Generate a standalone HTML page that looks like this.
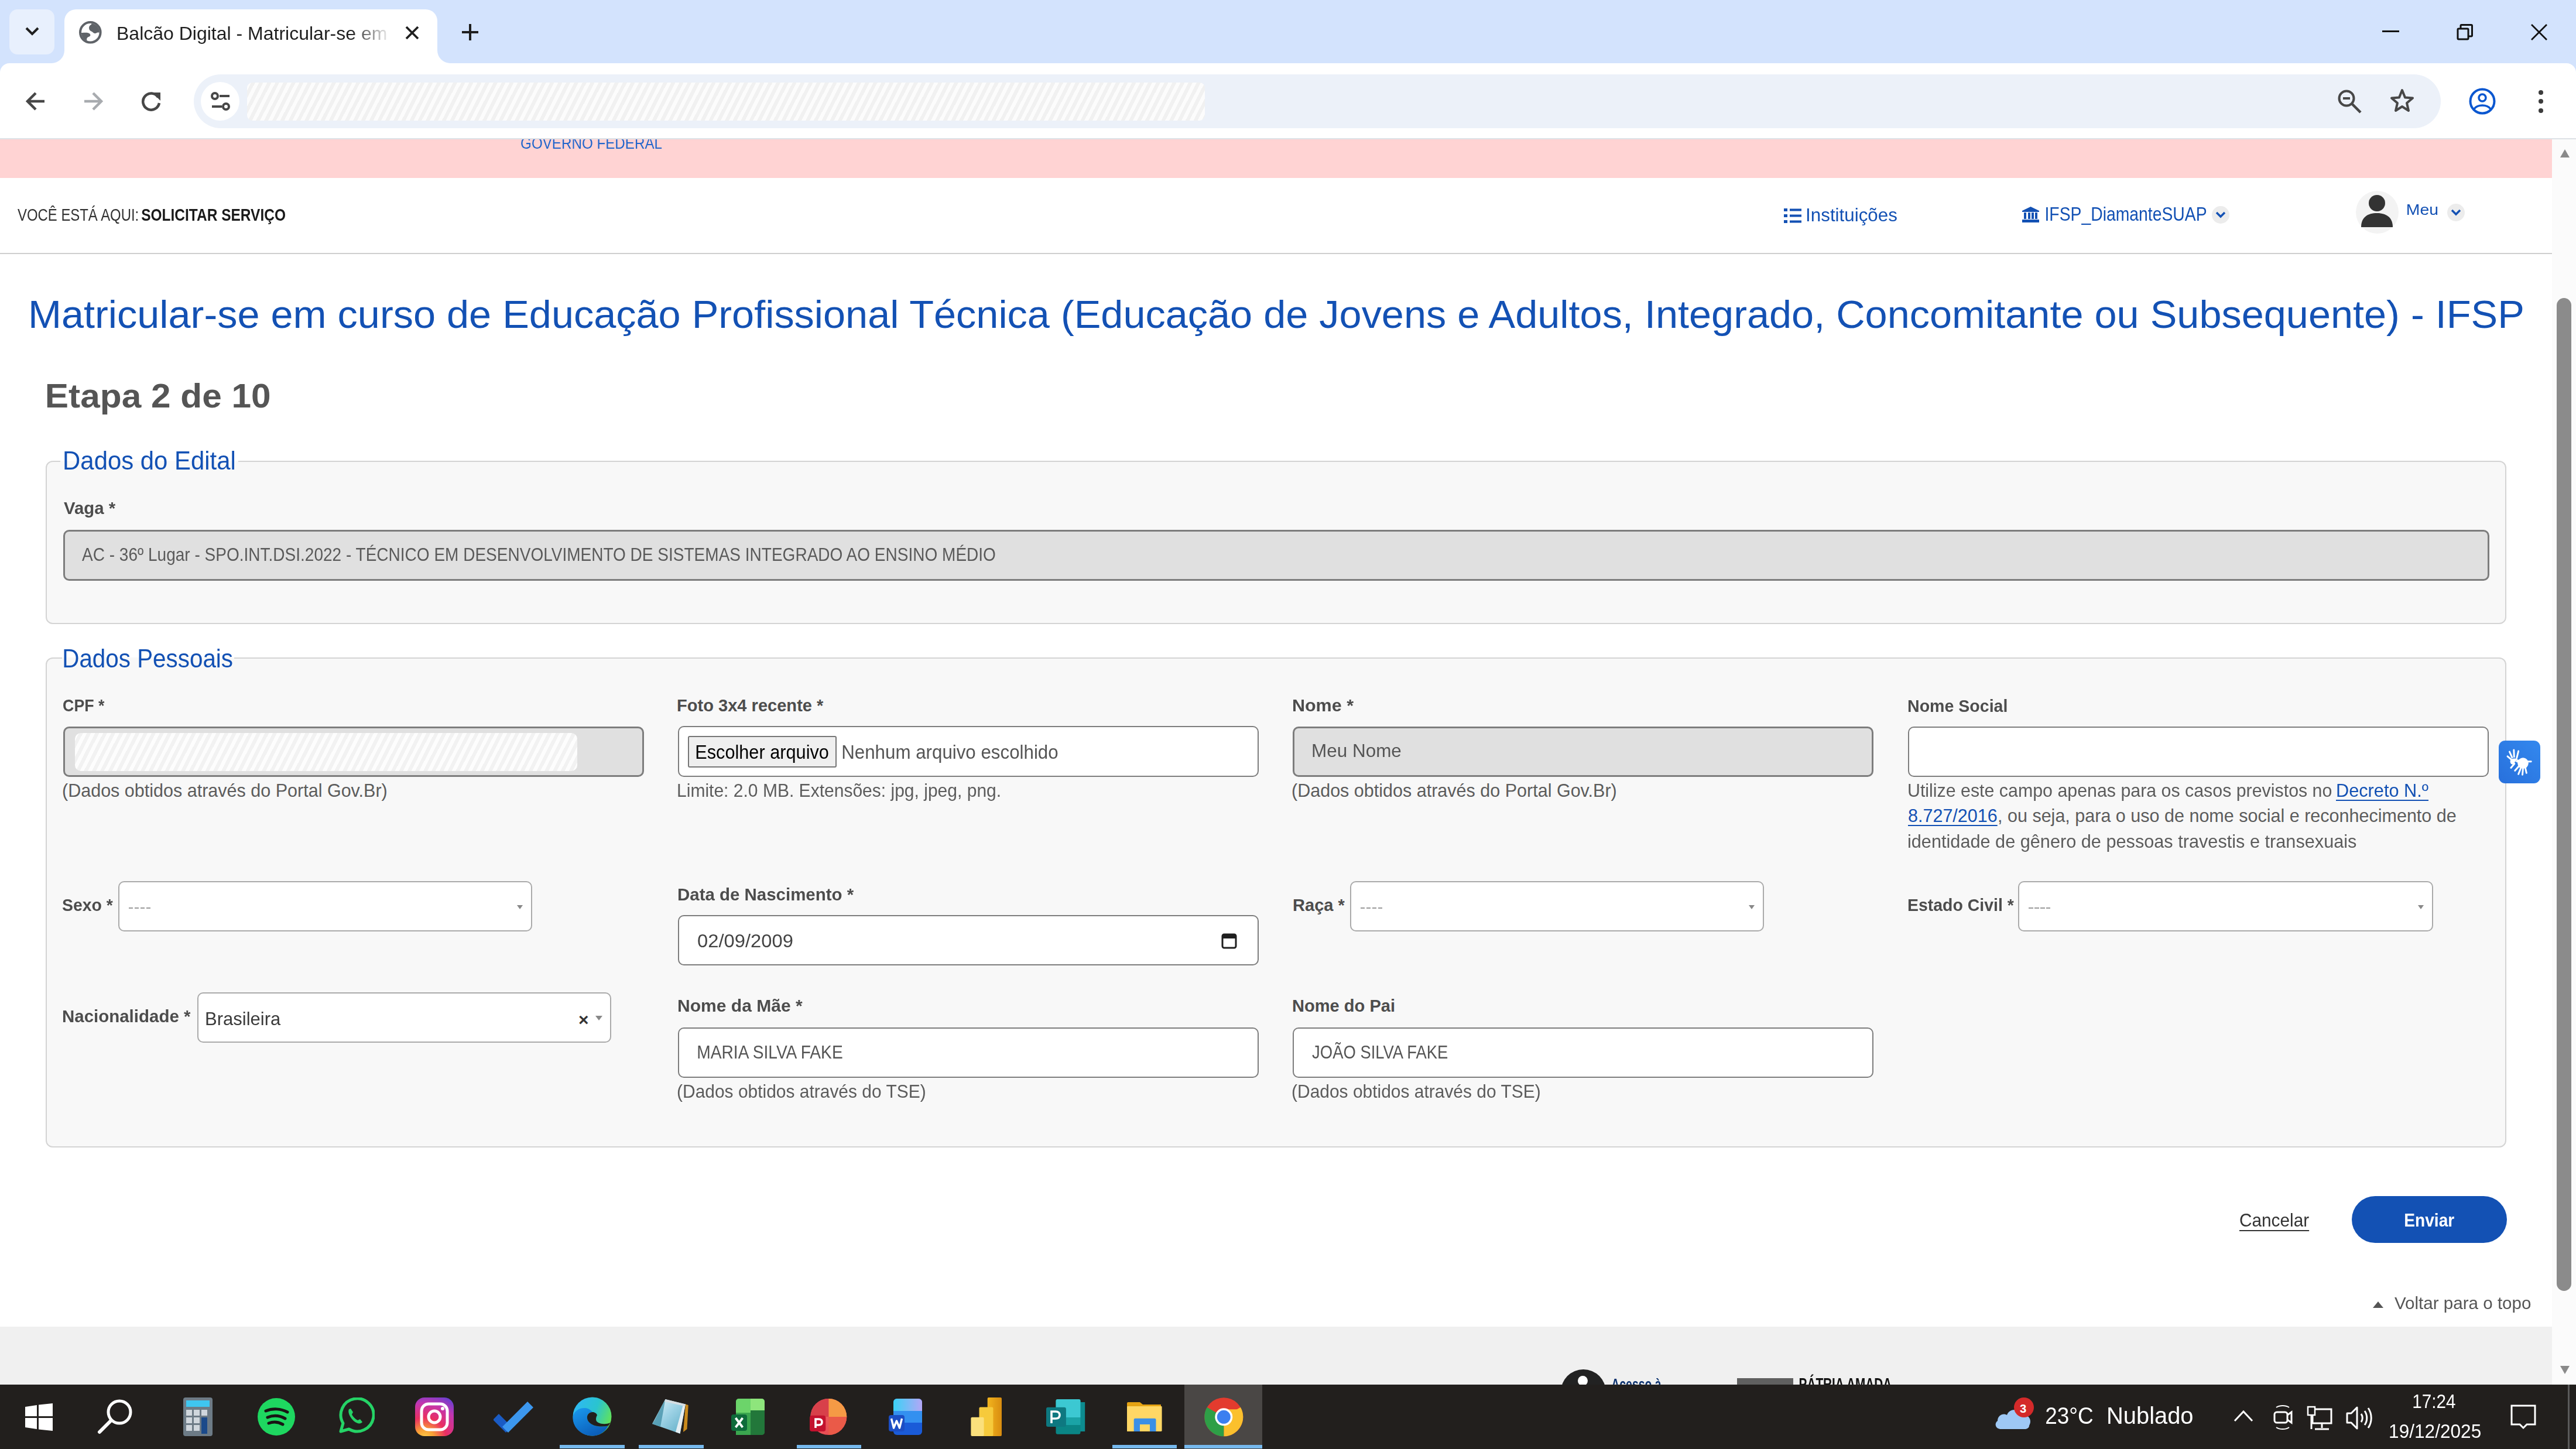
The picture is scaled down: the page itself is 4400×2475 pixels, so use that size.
<!DOCTYPE html><html><head><meta charset="utf-8"><style>*{margin:0;padding:0}
html,body{width:4400px;height:2475px;overflow:hidden;background:#fff}
body{position:relative;font-family:"Liberation Sans",sans-serif}
body>div,body>svg{position:absolute}
.t{white-space:nowrap}
</style></head><body>
<div style="left:0px;top:0px;width:4400px;height:140px;background:#d3e3fd"></div>
<div style="left:16px;top:16px;width:77px;height:77px;background:#e8f0fd;border-radius:14px"></div>
<svg style="left:43px;top:46px" width="24" height="16" viewBox="0 0 24 16"><path d="M2 2 L12 12 L22 2" fill="none" stroke="#1f1f1f" stroke-width="4"/></svg>
<div style="left:110px;top:16px;width:637px;height:94px;background:#fff;border-radius:20px 20px 0 0"></div>
<svg style="left:88px;top:86px" width="22" height="22"><path d="M22 0 V22 H0 A22 22 0 0 0 22 0Z" fill="#fff"/></svg>
<svg style="left:747px;top:86px" width="22" height="22"><path d="M0 0 V22 H22 A22 22 0 0 1 0 0Z" fill="#fff"/></svg>
<svg style="left:134.5px;top:35.5px" width="39" height="39" viewBox="0 0 39 39"><circle cx="19.3" cy="19.3" r="17.3" fill="none" stroke="#5f6368" stroke-width="4"/><path d="M21.4 3.9 L21.2 5.6 C17.5 8 17 10 17.1 12 C17 15 19 17 22 18 C24 19 25 21 27 21 C29 21 30 20 31.5 19.4 L34.8 19.4 A15.5 15.5 0 0 0 21.4 3.9 Z" fill="#5f6368"/><path d="M3.8 20.1 L5.2 20.1 C9 20 12 19.5 14.5 20.1 C17 20.5 19.4 22 19.4 24 C19.4 26 16 27 14.5 28 C13 29 13 31 13.4 33.6 L13.1 33.5 A15.5 15.5 0 0 1 3.8 20.1 Z" fill="#5f6368"/></svg>
<div class="t" style="left:199px;top:32px;width:470px;height:50px;overflow:hidden;font-size:32px;line-height:50px;color:#1f1f1f;white-space:nowrap;-webkit-mask-image:linear-gradient(90deg,#000 85%,transparent 100%)">Balcão Digital - Matricular-se em curso</div>
<svg style="left:691px;top:44px" width="26" height="24" viewBox="0 0 26 24"><path d="M3 2 L23 22 M23 2 L3 22" stroke="#1f1f1f" stroke-width="3.8"/></svg>
<svg style="left:787px;top:40px" width="32" height="30" viewBox="0 0 32 30"><path d="M16 1 V29 M2 15 H30" stroke="#1f1f1f" stroke-width="4"/></svg>
<div style="left:4069px;top:52px;width:29px;height:3px;background:#111"></div>
<svg style="left:4195px;top:40px" width="32" height="30" viewBox="0 0 32 30"><rect x="3" y="9" width="18" height="18" rx="1.5" fill="none" stroke="#111" stroke-width="3"/><path d="M8 8 V4 Q8 2.5 9.5 2.5 H26 Q27.5 2.5 27.5 4 V20.5 Q27.5 22 26 22 H22" fill="none" stroke="#111" stroke-width="3"/></svg>
<svg style="left:4321px;top:40px" width="32" height="30" viewBox="0 0 32 30"><path d="M3 2 L29 28 M29 2 L3 28" stroke="#111" stroke-width="2.8"/></svg>
<div style="left:0px;top:108px;width:4400px;height:129px;background:#fff;border-radius:16px 16px 0 0"></div>
<div style="left:0px;top:236px;width:4400px;height:2px;background:#dde1e6"></div>
<svg style="left:43px;top:155px" width="36" height="36" viewBox="0 0 36 36"><path d="M33 18 H5 M18 4 L4 18 L18 32" fill="none" stroke="#474747" stroke-width="4.5"/></svg>
<svg style="left:141px;top:155px" width="36" height="36" viewBox="0 0 36 36"><path d="M3 18 H31 M18 4 L32 18 L18 32" fill="none" stroke="#a8abaf" stroke-width="4.5"/></svg>
<svg style="left:239px;top:155px" width="38" height="38" viewBox="0 0 38 38"><path d="M31 11 A14 14 0 1 0 33 21" fill="none" stroke="#474747" stroke-width="4.5"/><path d="M21 3 H35 V17 Z" fill="#474747"/></svg>
<div style="left:331px;top:127px;width:3838px;height:92px;background:#ecf1f9;border-radius:46px"></div>
<div style="left:343px;top:140px;width:66px;height:66px;border-radius:50%;background:#fff"></div>
<svg style="left:359px;top:156px" width="36" height="34" viewBox="0 0 36 34"><circle cx="8" cy="8" r="5" fill="none" stroke="#474747" stroke-width="4"/><path d="M16 8 H33" stroke="#474747" stroke-width="4"/><circle cx="27" cy="26" r="5" fill="none" stroke="#474747" stroke-width="4"/><path d="M3 26 H20" stroke="#474747" stroke-width="4"/></svg>
<div style="left:422px;top:141px;width:1636px;height:65px;border-radius:9px;background:repeating-linear-gradient(117deg,#fcfcfc 0 6.15px,#f1f1f1 6.15px 12.3px)"></div>
<svg style="left:3992px;top:152px" width="44" height="42" viewBox="0 0 44 42"><circle cx="16" cy="16" r="12.5" fill="none" stroke="#474747" stroke-width="4"/><path d="M10 16 H22" stroke="#474747" stroke-width="4"/><path d="M25 25 L40 40" stroke="#474747" stroke-width="4.5"/></svg>
<svg style="left:4081px;top:150px" width="44" height="44" viewBox="0 0 44 44"><path d="M22 4 L27 16.5 L40 17.5 L30 26 L33 39 L22 32 L11 39 L14 26 L4 17.5 L17 16.5 Z" fill="none" stroke="#474747" stroke-width="4" stroke-linejoin="round"/></svg>
<svg style="left:4215px;top:149px" width="50" height="48" viewBox="0 0 50 48"><circle cx="25" cy="24" r="20.5" fill="none" stroke="#0b57d0" stroke-width="4"/><circle cx="25" cy="18" r="6" fill="none" stroke="#0b57d0" stroke-width="3.5"/><path d="M11 37 C17 29 33 29 39 37" fill="none" stroke="#0b57d0" stroke-width="3.5"/></svg>
<div style="left:4336px;top:154px;width:8px;height:8px;border-radius:50%;background:#3c3c3c"></div>
<div style="left:4336px;top:169px;width:8px;height:8px;border-radius:50%;background:#3c3c3c"></div>
<div style="left:4336px;top:185px;width:8px;height:8px;border-radius:50%;background:#3c3c3c"></div>
<div style="left:0px;top:238px;width:4359px;height:2127px;background:#fff"></div>
<div style="left:0px;top:238px;width:4359px;height:66px;background:#ffd3d3"></div>
<div class="t" style="left:889.00px;top:230.00px;font-size:27.62px;line-height:30.85px;color:#2266cc;transform:scaleX(0.8759);transform-origin:1.00px 0;clip-path:inset(8px 0 0 0)">GOVERNO FEDERAL</div>
<div class="t" style="left:30.00px;top:351.29px;font-size:29.51px;line-height:32.96px;color:#333;transform:scaleX(0.8103);transform-origin:0.00px 0;">VOCÊ ESTÁ AQUI:</div>
<div class="t" style="left:241.00px;top:351.29px;font-size:29.51px;line-height:32.96px;color:#1a1a1a;font-weight:700;transform:scaleX(0.8305);transform-origin:1.00px 0;">SOLICITAR SERVIÇO</div>
<div style="left:0px;top:432px;width:4359px;height:2px;background:#cfcfcf"></div>
<svg style="left:3046px;top:355px" width="32" height="27" viewBox="0 0 32 27"><rect x="1" y="1" width="6" height="5" fill="#1351b4"/><rect x="1" y="11" width="6" height="5" fill="#1351b4"/><rect x="1" y="21" width="6" height="5" fill="#1351b4"/><rect x="11" y="1.5" width="20" height="4" fill="#1351b4"/><rect x="11" y="11.5" width="20" height="4" fill="#1351b4"/><rect x="11" y="21.5" width="20" height="4" fill="#1351b4"/></svg>
<div class="t" style="left:3084.00px;top:350.05px;font-size:31.98px;line-height:35.72px;color:#1351b4;transform:scaleX(0.9808);transform-origin:3.00px 0;">Instituições</div>
<svg style="left:3453px;top:352px" width="31" height="28" viewBox="0 0 31 28"><path d="M15.5 1 L30 8 V10 H1 V8 Z" fill="#1351b4"/><rect x="4" y="11" width="4" height="11" fill="#1351b4"/><rect x="11" y="11" width="4" height="11" fill="#1351b4"/><rect x="17" y="11" width="4" height="11" fill="#1351b4"/><rect x="23" y="11" width="4" height="11" fill="#1351b4"/><rect x="1" y="23" width="29" height="5" fill="#1351b4"/></svg>
<div class="t" style="left:3492.00px;top:346.74px;font-size:33.43px;line-height:37.35px;color:#1351b4;transform:scaleX(0.8478);transform-origin:3.00px 0;">IFSP_DiamanteSUAP</div>
<div style="left:3778px;top:352px;width:30px;height:30px;border-radius:50%;background:#ececec"></div>
<svg style="left:3784px;top:361px" width="18" height="12" viewBox="0 0 18 12"><path d="M2 2 L9 9 L16 2" fill="none" stroke="#1351b4" stroke-width="3.5"/></svg>
<div style="left:4024px;top:326px;width:73px;height:73px;border-radius:50%;background:#f3f3f3"></div>
<svg style="left:4030px;top:331px" width="60" height="60" viewBox="0 0 60 60"><circle cx="30" cy="16" r="14" fill="#333"/><path d="M3 57 C3 40 14 33 30 33 C46 33 57 40 57 57 Z" fill="#333"/></svg>
<div class="t" style="left:4110.00px;top:344.32px;font-size:26.16px;line-height:29.23px;color:#1351b4;transform:scaleX(1.0851);transform-origin:2.00px 0;">Meu</div>
<div style="left:4180px;top:348px;width:30px;height:30px;border-radius:50%;background:#ececec"></div>
<svg style="left:4186px;top:357px" width="18" height="12" viewBox="0 0 18 12"><path d="M2 2 L9 9 L16 2" fill="none" stroke="#1351b4" stroke-width="3.5"/></svg>
<div class="t" style="left:48.00px;top:498.81px;font-size:67.59px;line-height:75.51px;color:#1351b4;transform:scaleX(1.0129);transform-origin:5.00px 0;">Matricular-se em curso de Educação Profissional Técnica (Educação de Jovens e Adultos, Integrado, Concomitante ou Subsequente) - IFSP</div>
<div class="t" style="left:77.00px;top:644.37px;font-size:58.14px;line-height:64.95px;color:#555;font-weight:700;transform:scaleX(1.0384);transform-origin:4.00px 0;">Etapa 2 de 10</div>
<div style="left:78px;top:787px;width:4203px;height:279px;background:#f8f8f8;border:2px solid #d4d4d4;border-radius:12px;box-sizing:border-box"></div>
<div style="left:103px;top:785px;width:304px;height:5px;background:linear-gradient(#fff 0 2px,#f8f8f8 2px)"></div>
<div class="t" style="left:107.00px;top:762.53px;font-size:43.61px;line-height:48.72px;color:#1351b4;transform:scaleX(0.9603);transform-origin:3.00px 0;">Dados do Edital</div>
<div style="left:78px;top:1123px;width:4203px;height:837px;background:#f8f8f8;border:2px solid #d4d4d4;border-radius:12px;box-sizing:border-box"></div>
<div style="left:106px;top:1121px;width:294px;height:5px;background:linear-gradient(#fff 0 2px,#f8f8f8 2px)"></div>
<div class="t" style="left:106.00px;top:1100.53px;font-size:43.61px;line-height:48.72px;color:#1351b4;transform:scaleX(0.9260);transform-origin:3.00px 0;">Dados Pessoais</div>
<div class="t" style="left:109.00px;top:851.68px;font-size:29.07px;line-height:32.48px;color:#4d4d4d;font-weight:700;transform:scaleX(1.0115);transform-origin:0.00px 0;">Vaga *</div>
<div style="left:108px;top:905px;width:4144px;height:87px;background:#e0e0e0;border:3px solid #7d7d7d;border-radius:10px;box-sizing:border-box"></div>
<div class="t" style="left:140.00px;top:930.05px;font-size:31.98px;line-height:35.72px;color:#5a5a5a;transform:scaleX(0.8764);transform-origin:0.00px 0;">AC - 36º Lugar - SPO.INT.DSI.2022 - TÉCNICO EM DESENVOLVIMENTO DE SISTEMAS INTEGRADO AO ENSINO MÉDIO</div>
<div class="t" style="left:107.00px;top:1188.68px;font-size:29.07px;line-height:32.48px;color:#4d4d4d;font-weight:700;transform:scaleX(0.9211);transform-origin:1.00px 0;">CPF *</div>
<div style="left:108px;top:1241px;width:992px;height:86px;background:#e0e0e0;border:3px solid #7d7d7d;border-radius:10px;box-sizing:border-box"></div>
<div style="left:128px;top:1252px;width:858px;height:65px;border-radius:10px;background:repeating-linear-gradient(117deg,#fdfdfd 0 6.15px,#f2f2f2 6.15px 12.3px)"></div>
<div class="t" style="left:106.00px;top:1333.37px;font-size:30.52px;line-height:34.10px;color:#5c5c5c;">(Dados obtidos através do Portal Gov.Br)</div>
<div class="t" style="left:1156.00px;top:1188.68px;font-size:29.07px;line-height:32.48px;color:#4d4d4d;font-weight:700;">Foto 3x4 recente *</div>
<div style="left:1158px;top:1240px;width:992px;height:87px;background:#fff;border:2px solid #7d7d7d;border-radius:10px;box-sizing:border-box"></div>
<div style="left:1175px;top:1257px;width:254px;height:54px;background:#efefef;border:2px solid #767676;border-radius:3px;box-sizing:border-box"></div>
<div class="t" style="left:1187.00px;top:1265.74px;font-size:33.43px;line-height:37.35px;color:#000;transform:scaleX(0.9184);transform-origin:3.00px 0;">Escolher arquivo</div>
<div class="t" style="left:1437.00px;top:1265.74px;font-size:33.43px;line-height:37.35px;color:#555;transform:scaleX(0.9362);transform-origin:3.00px 0;">Nenhum arquivo escolhido</div>
<div class="t" style="left:1156.00px;top:1333.37px;font-size:30.52px;line-height:34.10px;color:#5c5c5c;transform:scaleX(0.9839);transform-origin:2.00px 0;">Limite: 2.0 MB. Extensões: jpg, jpeg, png.</div>
<div class="t" style="left:2207.00px;top:1188.68px;font-size:29.07px;line-height:32.48px;color:#4d4d4d;font-weight:700;transform:scaleX(1.0510);transform-origin:2.00px 0;">Nome *</div>
<div style="left:2208px;top:1241px;width:992px;height:86px;background:#e0e0e0;border:3px solid #7d7d7d;border-radius:10px;box-sizing:border-box"></div>
<div class="t" style="left:2240.00px;top:1265.71px;font-size:31.25px;line-height:34.91px;color:#555;transform:scaleX(1.0067);transform-origin:2.00px 0;">Meu Nome</div>
<div class="t" style="left:2206.00px;top:1333.37px;font-size:30.52px;line-height:34.10px;color:#5c5c5c;">(Dados obtidos através do Portal Gov.Br)</div>
<div class="t" style="left:3258.00px;top:1189.68px;font-size:29.07px;line-height:32.48px;color:#4d4d4d;font-weight:700;transform:scaleX(0.9824);transform-origin:2.00px 0;">Nome Social</div>
<div style="left:3259px;top:1241px;width:992px;height:86px;background:#fff;border:2px solid #7d7d7d;border-radius:10px;box-sizing:border-box"></div>
<div class="t" style="left:3258.00px;top:1333.37px;font-size:30.52px;line-height:34.10px;color:#5c5c5c;transform:scaleX(0.9945);transform-origin:2.00px 0;">Utilize este campo apenas para os casos previstos no</div>
<div class="t" style="left:3990.00px;top:1333.37px;font-size:30.52px;line-height:34.10px;color:#1351b4;transform:scaleX(1.0065);transform-origin:2.00px 0;text-decoration:underline;text-underline-offset:5px;text-decoration-thickness:2px">Decreto N.º</div>
<div class="t" style="left:3259.00px;top:1376.37px;font-size:30.52px;line-height:34.10px;color:#1351b4;text-decoration:underline;text-underline-offset:5px;text-decoration-thickness:2px">8.727/2016</div>
<div class="t" style="left:3412.00px;top:1376.37px;font-size:30.52px;line-height:34.10px;color:#5c5c5c;">, ou seja, para o uso de nome social e reconhecimento de</div>
<div class="t" style="left:3258.00px;top:1420.37px;font-size:30.52px;line-height:34.10px;color:#5c5c5c;transform:scaleX(1.0053);transform-origin:2.00px 0;">identidade de gênero de pessoas travestis e transexuais</div>
<div style="left:4268px;top:1265px;width:71px;height:73px;border-radius:11px;background:linear-gradient(45deg,#2870dc,#3388ee)"></div>
<svg style="left:4268px;top:1265px" width="71" height="74" viewBox="0 0 71 74"><g transform="translate(-7.5,-5.5) scale(0.98)"><g fill="none" stroke="#fff" stroke-linecap="round" stroke-width="3"><path d="M23 33 L30 39 M26.5 25 L31 35 M34 22 L34.5 34 M42 24 L39 36"/><path d="M29 53 L35 46 M36 58 L43 50 M42 64 L46 54 M49 65 L50 54 M56 62 L54 53 M57 42 L64 42"/></g><path d="M30 38 C34 36 40 36 42 40 C38 40 34 42 36 46 C33 48 29 48 28 44 C27 41 28 39 30 38Z" fill="#fff"/><circle cx="50" cy="45" r="9.5" fill="#fff"/><path d="M36 42 L44 38 L46 46 Z" fill="#fff"/></g></svg>
<div class="t" style="left:106.00px;top:1529.68px;font-size:29.07px;line-height:32.48px;color:#4d4d4d;font-weight:700;transform:scaleX(0.9773);transform-origin:1.00px 0;">Sexo *</div>
<div style="left:202px;top:1505px;width:707px;height:86px;background:#fff;border:2px solid #aaa;border-radius:10px;box-sizing:border-box"></div>
<div style="left:883px;top:1546px;width:0;height:0;border-left:5.5px solid transparent;border-right:5.5px solid transparent;border-top:7px solid #888"></div>
<div style="left:220px;top:1550px;width:37px;height:2px;background:repeating-linear-gradient(90deg,#999 0 7.5px,transparent 7.5px 10px)"></div>
<div class="t" style="left:1157.00px;top:1511.68px;font-size:29.07px;line-height:32.48px;color:#4d4d4d;font-weight:700;transform:scaleX(1.0136);transform-origin:2.00px 0;">Data de Nascimento *</div>
<div style="left:1158px;top:1563px;width:992px;height:86px;background:#fff;border:2px solid #7d7d7d;border-radius:10px;box-sizing:border-box"></div>
<div class="t" style="left:1191.00px;top:1590.05px;font-size:31.98px;line-height:35.72px;color:#444;transform:scaleX(1.0253);transform-origin:1.00px 0;">02/09/2009</div>
<svg style="left:2086px;top:1594px" width="27" height="27" viewBox="0 0 27 27"><rect x="2" y="2" width="23" height="23" rx="3" fill="none" stroke="#1f1f1f" stroke-width="3"/><rect x="2" y="2" width="23" height="7" fill="#1f1f1f"/></svg>
<div class="t" style="left:2208.00px;top:1529.68px;font-size:29.07px;line-height:32.48px;color:#4d4d4d;font-weight:700;">Raça *</div>
<div style="left:2306px;top:1505px;width:707px;height:86px;background:#fff;border:2px solid #aaa;border-radius:10px;box-sizing:border-box"></div>
<div style="left:2987px;top:1546px;width:0;height:0;border-left:5.5px solid transparent;border-right:5.5px solid transparent;border-top:7px solid #888"></div>
<div style="left:2324px;top:1550px;width:37px;height:2px;background:repeating-linear-gradient(90deg,#999 0 7.5px,transparent 7.5px 10px)"></div>
<div class="t" style="left:3258.00px;top:1529.68px;font-size:29.07px;line-height:32.48px;color:#4d4d4d;font-weight:700;transform:scaleX(0.9783);transform-origin:2.00px 0;">Estado Civil *</div>
<div style="left:3447px;top:1505px;width:709px;height:86px;background:#fff;border:2px solid #aaa;border-radius:10px;box-sizing:border-box"></div>
<div style="left:4130px;top:1546px;width:0;height:0;border-left:5.5px solid transparent;border-right:5.5px solid transparent;border-top:7px solid #888"></div>
<div style="left:3465px;top:1550px;width:37px;height:2px;background:repeating-linear-gradient(90deg,#999 0 7.5px,transparent 7.5px 10px)"></div>
<div class="t" style="left:106.00px;top:1719.68px;font-size:29.07px;line-height:32.48px;color:#4d4d4d;font-weight:700;transform:scaleX(1.0140);transform-origin:2.00px 0;">Nacionalidade *</div>
<div style="left:337px;top:1695px;width:707px;height:86px;background:#fff;border:2px solid #aaa;border-radius:10px;box-sizing:border-box"></div>
<div class="t" style="left:350.00px;top:1723.05px;font-size:31.98px;line-height:35.72px;color:#3a3a3a;transform:scaleX(0.9695);transform-origin:3.00px 0;">Brasileira</div>
<div class="t" style="left:988.00px;top:1724.84px;font-size:30.00px;line-height:33.52px;color:#333;font-weight:700;">×</div>
<div style="left:1017px;top:1735px;width:0;height:0;border-left:6px solid transparent;border-right:6px solid transparent;border-top:8px solid #888"></div>
<div class="t" style="left:1157.00px;top:1701.68px;font-size:29.07px;line-height:32.48px;color:#4d4d4d;font-weight:700;transform:scaleX(1.0341);transform-origin:2.00px 0;">Nome da Mãe *</div>
<div style="left:1158px;top:1755px;width:992px;height:86px;background:#fff;border:2px solid #7d7d7d;border-radius:10px;box-sizing:border-box"></div>
<div class="t" style="left:1190.00px;top:1780.71px;font-size:31.25px;line-height:34.91px;color:#555;transform:scaleX(0.9015);transform-origin:2.00px 0;">MARIA SILVA FAKE</div>
<div class="t" style="left:1156.00px;top:1847.37px;font-size:30.52px;line-height:34.10px;color:#5c5c5c;transform:scaleX(0.9814);transform-origin:2.00px 0;">(Dados obtidos através do TSE)</div>
<div class="t" style="left:2207.00px;top:1701.68px;font-size:29.07px;line-height:32.48px;color:#4d4d4d;font-weight:700;">Nome do Pai</div>
<div style="left:2208px;top:1755px;width:992px;height:86px;background:#fff;border:2px solid #7d7d7d;border-radius:10px;box-sizing:border-box"></div>
<div class="t" style="left:2241.00px;top:1780.71px;font-size:31.25px;line-height:34.91px;color:#555;transform:scaleX(0.8779);transform-origin:1.00px 0;">JOÃO SILVA FAKE</div>
<div class="t" style="left:2206.00px;top:1847.37px;font-size:30.52px;line-height:34.10px;color:#5c5c5c;transform:scaleX(0.9814);transform-origin:2.00px 0;">(Dados obtidos através do TSE)</div>
<div class="t" style="left:3825.00px;top:2067.37px;font-size:30.52px;line-height:34.10px;color:#333;transform:scaleX(0.9752);transform-origin:1.00px 0;text-decoration:underline;text-underline-offset:6px;text-decoration-thickness:2px">Cancelar</div>
<div style="left:4017px;top:2043px;width:265px;height:80px;background:#1351b4;border-radius:40px"></div>
<div class="t" style="left:4106.00px;top:2067.37px;font-size:30.52px;line-height:34.10px;color:#fff;font-weight:700;transform:scaleX(0.9231);transform-origin:2.00px 0;">Enviar</div>
<div style="left:4053px;top:2223px;width:0;height:0;border-left:9px solid transparent;border-right:9px solid transparent;border-bottom:11px solid #555"></div>
<div class="t" style="left:4090.00px;top:2209.68px;font-size:29.07px;line-height:32.48px;color:#555;transform:scaleX(1.0175);transform-origin:0.00px 0;">Voltar para o topo</div>
<div style="left:0px;top:2266px;width:4359px;height:99px;background:#f0f0f0"></div>
<div style="left:2666px;top:2339px;width:77px;height:77px;border-radius:50%;background:#222"></div>
<div style="left:2695px;top:2350px;width:17px;height:17px;border-radius:50%;background:#fff"></div>
<div class="t" style="left:2752.00px;top:2350.00px;font-size:27.62px;line-height:30.85px;color:#0c326f;font-weight:700;transform:scaleX(0.7025);transform-origin:1.00px 0;">Acesso à</div>
<div style="left:2967px;top:2354px;width:96px;height:11px;background:#606060"></div>
<div class="t" style="left:3072.00px;top:2347.68px;font-size:29.07px;line-height:32.48px;color:#111;font-weight:700;transform:scaleX(0.7136);transform-origin:2.00px 0;">PÁTRIA AMADA</div>
<div style="left:4359px;top:238px;width:41px;height:2127px;background:#fbfbfb"></div>
<div style="left:4373px;top:255px;width:0;height:0;border-left:8px solid transparent;border-right:8px solid transparent;border-bottom:14px solid #8a8a8a"></div>
<div style="left:4367px;top:509px;width:25px;height:1696px;background:#8b8b8b;border-radius:13px"></div>
<div style="left:4373px;top:2333px;width:0;height:0;border-left:8px solid transparent;border-right:8px solid transparent;border-top:14px solid #8a8a8a"></div>
<div style="left:0px;top:2365px;width:4400px;height:110px;background:#221f1d"></div>
<svg style="left:43px;top:2397px" width="47" height="47" viewBox="0 0 47 47"><path d="M0 6 L20 3 V22 H0Z M23 2.5 L47 0 V22 H23Z M0 25 H20 V44 L0 41Z M23 25 H47 V47 L23 44.5Z" fill="#fff"/></svg>
<svg style="left:166px;top:2388px" width="62" height="62" viewBox="0 0 62 62"><circle cx="38" cy="24" r="19" fill="none" stroke="#fff" stroke-width="5"/><path d="M24 38 L4 58" stroke="#fff" stroke-width="6" stroke-linecap="round"/></svg>
<svg style="left:313px;top:2387px" width="50" height="66" viewBox="0 0 50 66"><rect x="0" y="0" width="50" height="66" rx="4" fill="#6d7b86"/><rect x="5" y="5" width="40" height="11" fill="#3fc6f0"/><rect x="5" y="21" width="10" height="10" fill="#cfd6dc"/><rect x="18" y="21" width="10" height="10" fill="#cfd6dc"/><rect x="31" y="21" width="10" height="10" fill="#cfd6dc"/><rect x="5" y="34" width="10" height="10" fill="#cfd6dc"/><rect x="18" y="34" width="10" height="10" fill="#cfd6dc"/><rect x="5" y="47" width="10" height="10" fill="#cfd6dc"/><rect x="18" y="47" width="10" height="10" fill="#cfd6dc"/><rect x="31" y="34" width="10" height="28" fill="#1b4a8a"/><rect x="5" y="60" width="10" height="0" fill="#cfd6dc"/></svg>
<svg style="left:440px;top:2388px" width="64" height="64" viewBox="0 0 64 64"><circle cx="32" cy="32" r="32" fill="#1ed760"/><path d="M14 22 C26 17 40 18 51 24 M17 33 C27 29 38 30 47 35 M19 43 C27 40 36 41 43 45" fill="none" stroke="#191414" stroke-width="5" stroke-linecap="round"/></svg>
<svg style="left:574px;top:2387px" width="66" height="66" viewBox="0 0 66 66"><path d="M8 58 L12 44 A28 28 0 1 1 22 54 Z" fill="none" stroke="#25d366" stroke-width="5" stroke-linejoin="round"/><path d="M22 20 C20 24 22 32 30 40 C36 45 42 46 45 42 L41 37 L37 39 C33 37 29 33 27 29 L29 25 L25 19Z" fill="#25d366"/></svg>
<svg style="left:709px;top:2387px" width="66" height="66" viewBox="0 0 66 66"><defs><radialGradient id="ig" cx="0.25" cy="1.08" r="1.25"><stop offset="0" stop-color="#fdd54c"/><stop offset="0.2" stop-color="#f9a035"/><stop offset="0.45" stop-color="#ea2f62"/><stop offset="0.75" stop-color="#c236b0"/><stop offset="1" stop-color="#5f40d4"/></radialGradient></defs><rect width="66" height="66" rx="16" fill="url(#ig)"/><rect x="11" y="11" width="44" height="44" rx="12" fill="none" stroke="#fff" stroke-width="5"/><circle cx="33" cy="33" r="10" fill="none" stroke="#fff" stroke-width="5"/><circle cx="47" cy="19" r="3" fill="#fff"/></svg>
<svg style="left:843px;top:2392px" width="68" height="60" viewBox="0 0 68 60"><path d="M4 28 L26 50" stroke="#1a5bc4" stroke-width="14"/><path d="M20 50 L63 7" stroke="#3c97ee" stroke-width="14"/></svg>
<svg style="left:978px;top:2386px" width="67" height="67" viewBox="0 0 67 67"><defs><linearGradient id="ed" x1="0" y1="0.2" x2="1" y2="0.6"><stop offset="0" stop-color="#2fb8f5"/><stop offset="0.55" stop-color="#2ac4cf"/><stop offset="1" stop-color="#64e455"/></linearGradient><linearGradient id="ed2" x1="0" y1="0" x2="0.6" y2="1"><stop offset="0" stop-color="#1a9af0"/><stop offset="1" stop-color="#0b5db8"/></linearGradient></defs><circle cx="33.5" cy="33.5" r="33" fill="url(#ed)"/><path d="M0.5 36 C1 24 12 18 22 19 C30 20 34 26 34 26 C28 26 24 31 25 37 C27 47 40 53 61 49.5 C55 61 45 66.5 33.5 66.5 C15 66.5 0.5 52 0.5 36Z" fill="url(#ed2)"/><path d="M34 26 C28 26 24 31 25 37 C27 47 40 53 61 49.5 C62.5 47.5 63.5 46 64.5 44 C58 47 50 47 44 44 C38 41 40 35 42 31 C40 27 37 26 34 26Z" fill="#221f1d"/></svg>
<div style="left:956px;top:2468px;width:111px;height:6px;background:#76b9ed"></div>
<svg style="left:1114px;top:2390px" width="62" height="60" viewBox="0 0 62 60"><defs><linearGradient id="np" x1="0" y1="0" x2="1" y2="1"><stop offset="0" stop-color="#e8f6fb"/><stop offset="0.45" stop-color="#9fd3e6"/><stop offset="1" stop-color="#5aaac4"/></linearGradient></defs><path d="M22.4 0 L56.9 8.4 L47.6 58.7 L0 41.9 Z" fill="url(#np)"/><path d="M22.4 0 L16 12 L10 24 L4 36 L0 41.9 L14 47 L19 20 Z" fill="#3f8ea6" opacity="0.75"/><path d="M56.9 8.4 L47.6 58.7 L40 56 L53 9 Z" fill="#e6eef2"/><path d="M57 8.4 L61.7 10 L59.5 51 L53 56 Z" fill="#c98a1c"/><path d="M22.4 0 L56.9 8.4 L56 12 L21 4Z" fill="#d5dde2"/></svg>
<div style="left:1091px;top:2468px;width:111px;height:6px;background:#76b9ed"></div>
<svg style="left:1249px;top:2389px" width="57" height="62" viewBox="0 0 57 62"><rect x="8" y="0" width="49" height="62" rx="5" fill="#2a8f45"/><path d="M13 0 H33 V24 H8 V5 A5 5 0 0 1 13 0Z" fill="#6cd46a"/><path d="M33 0 H52 A5 5 0 0 1 57 5 V20 H33Z" fill="#8ee57c"/><path d="M33 20 H57 V57 A5 5 0 0 1 52 62 H33Z" fill="#22773a"/><rect x="8" y="24" width="25" height="38" fill="#3ba64f"/><rect x="0" y="27" width="27" height="28" rx="4" fill="#0e6b3a"/><path d="M7.5 33 L19.5 49 M19.5 33 L7.5 49" stroke="#fff" stroke-width="3.8"/></svg>
<svg style="left:1383px;top:2389px" width="64" height="62" viewBox="0 0 64 62"><defs><linearGradient id="pp" x1="0" y1="0" x2="1" y2="1"><stop offset="0" stop-color="#f26a6a"/><stop offset="1" stop-color="#e4424a"/></linearGradient></defs><circle cx="32.3" cy="31" r="31" fill="url(#pp)"/><path d="M32.3 0 A31 31 0 0 1 63.3 31 H32.3Z" fill="#f59a45"/><path d="M32.3 0 A31 31 0 0 0 1.3 31 H32.3Z" fill="#d8404a"/><path d="M32.3 31 H63.3 A31 31 0 0 1 32.3 62Z" fill="#ea5a48"/><rect x="0" y="28.7" width="27.3" height="27.3" rx="4" fill="#c3122e"/><path d="M10 50 V35 H15.5 C20 35 21 38 21 40 C21 43 19 45 15.5 45 H10" fill="none" stroke="#fff" stroke-width="3.6"/></svg>
<div style="left:1361px;top:2468px;width:110px;height:6px;background:#76b9ed"></div>
<svg style="left:1518px;top:2389px" width="57" height="62" viewBox="0 0 57 62"><defs><linearGradient id="wd" x1="0" y1="0" x2="1" y2="0"><stop offset="0" stop-color="#3ad2f6"/><stop offset="1" stop-color="#b4a6f6"/></linearGradient></defs><rect x="8" y="0" width="49" height="62" rx="6" fill="#1a5bd8"/><path d="M14 0 H51 A6 6 0 0 1 57 6 V21 H8 V6 A6 6 0 0 1 14 0Z" fill="url(#wd)"/><rect x="8" y="21" width="49" height="20" fill="#3390f0"/><rect x="0" y="28" width="27" height="28" rx="4" fill="#1c4ec4"/><path d="M4.5 34 L8.5 50 L13.5 38 L18.5 50 L22.5 34" fill="none" stroke="#fff" stroke-width="3.4" stroke-linejoin="round"/></svg>
<svg style="left:1658px;top:2387px" width="53" height="66" viewBox="0 0 53 66"><defs><linearGradient id="pb" x1="0" y1="0" x2="1" y2="0"><stop offset="0" stop-color="#f2b41e"/><stop offset="1" stop-color="#d88c10"/></linearGradient></defs><rect x="28.7" y="0" width="24.3" height="66" rx="2" fill="url(#pb)"/><rect x="14.5" y="16.6" width="23.9" height="49.4" rx="2" fill="#f6ca3c"/><rect x="0.4" y="33.7" width="22.2" height="32.3" rx="2" fill="#fbe07c"/></svg>
<svg style="left:1787px;top:2390px" width="67" height="60" viewBox="0 0 67 60"><rect x="52" y="5" width="14.2" height="50" fill="#0d8b8f"/><rect x="16.5" y="0" width="42" height="59.7" rx="3" fill="#0a8585"/><path d="M19.5 0 H55.5 A3 3 0 0 1 58.5 3 V31 H16.5 V3 A3 3 0 0 1 19.5 0Z" fill="#3cc8d2"/><rect x="16.5" y="31" width="42" height="13" fill="#1aa3a6"/><rect x="0" y="13.7" width="33.9" height="33.3" rx="3" fill="#0e7880"/><path d="M9 41 V21 H16 C21 21 23 24 23 27 C23 30.5 21 33 16 33 H9" fill="none" stroke="#fff" stroke-width="3.6"/></svg>
<svg style="left:1925px;top:2395px" width="60" height="50" viewBox="0 0 60 50"><path d="M0 2 A2 2 0 0 1 2 0 H22 L27 4 H58 V50 H0Z" fill="#e5a313"/><rect x="0" y="7" width="59.6" height="42.8" rx="1" fill="#ffd765"/><path d="M11.7 50 V30 A2.3 2.3 0 0 1 14 27.7 H47.2 A2.3 2.3 0 0 1 49.5 30 V50 H39 V38 H22 V50Z" fill="#3b8fe6"/></svg>
<div style="left:1900px;top:2468px;width:110px;height:6px;background:#76b9ed"></div>
<div style="left:2023px;top:2365px;width:133px;height:110px;background:#4a4745"></div>
<svg style="left:2057px;top:2387px" width="67" height="67" viewBox="0 0 67 67"><circle cx="33.3" cy="33.3" r="33" fill="#e33b2e"/><path d="M33.3 33.3 L61.9 16.8 A33 33 0 0 1 33.3 66.3 Z" fill="#fbc02d"/><path d="M33.3 33.3 L33.3 66.3 A33 33 0 0 1 4.7 16.8 Z" fill="#2e9f47"/><path d="M33.3 20.3 H61.9 L50 41 Z" fill="#fbc02d"/><path d="M4.7 16.8 L21.6 39.8 L33.3 66.3 L22 46 Z" fill="#2e9f47"/><circle cx="33.3" cy="33.3" r="15" fill="#fff"/><circle cx="33.3" cy="33.3" r="11.5" fill="#3b7ff0"/></svg>
<div style="left:2023px;top:2468px;width:133px;height:6px;background:#76b9ed"></div>
<svg style="left:3406px;top:2397px" width="68" height="46" viewBox="0 0 68 46"><path d="M12 44 C2 44 0 34 6 30 C6 20 16 16 22 20 C26 8 44 8 48 20 C58 18 66 28 60 38 C60 42 56 44 52 44Z" fill="#9ec8f5"/></svg>
<div style="left:3440px;top:2387px;width:34px;height:34px;border-radius:50%;background:#d42a2a"></div>
<div class="t" style="left:3450.00px;top:2394.58px;font-size:20.35px;line-height:22.73px;color:#fff;font-weight:700;">3</div>
<div class="t" style="left:3493.00px;top:2396.16px;font-size:40.70px;line-height:45.47px;color:#fff;transform:scaleX(0.9080);transform-origin:2.00px 0;">23°C</div>
<div class="t" style="left:3598.00px;top:2396.16px;font-size:40.70px;line-height:45.47px;color:#fff;transform:scaleX(0.9796);transform-origin:3.00px 0;">Nublado</div>
<svg style="left:3815px;top:2407px" width="34" height="24" viewBox="0 0 34 24"><path d="M2 20 L17 4 L32 20" fill="none" stroke="#fff" stroke-width="3"/></svg>
<svg style="left:3882px;top:2398px" width="34" height="46" viewBox="0 0 34 46"><rect x="3" y="14" width="22" height="18" rx="4" fill="none" stroke="#fff" stroke-width="3"/><path d="M25 19 L32 14 V32 L25 27" fill="none" stroke="#fff" stroke-width="3"/><path d="M6 6 C12 2 22 2 28 6 M6 40 C12 44 22 44 28 40" fill="none" stroke="#fff" stroke-width="2"/></svg>
<svg style="left:3940px;top:2401px" width="46" height="44" viewBox="0 0 46 44"><rect x="10" y="6" width="32" height="24" fill="none" stroke="#fff" stroke-width="3"/><path d="M26 30 V38 M14 40 H38" stroke="#fff" stroke-width="3"/><rect x="2" y="2" width="12" height="14" fill="#201e1d" stroke="#fff" stroke-width="2.5"/><path d="M8 16 V40" stroke="#fff" stroke-width="3"/></svg>
<svg style="left:4006px;top:2400px" width="46" height="44" viewBox="0 0 46 44"><path d="M3 14 H10 L20 4 V40 L10 30 H3 Z" fill="none" stroke="#fff" stroke-width="3" stroke-linejoin="round"/><path d="M27 15 C30 19 30 25 27 29 M33 10 C38 17 38 27 33 34 M39 5 C46 15 46 29 39 39" fill="none" stroke="#fff" stroke-width="3"/></svg>
<div class="t" style="left:4120.00px;top:2374.74px;font-size:33.43px;line-height:37.35px;color:#fff;transform:scaleX(0.8889);transform-origin:2.00px 0;">17:24</div>
<div class="t" style="left:4080.00px;top:2425.74px;font-size:33.43px;line-height:37.35px;color:#fff;transform:scaleX(0.9451);transform-origin:2.00px 0;">19/12/2025</div>
<svg style="left:4288px;top:2399px" width="44" height="44" viewBox="0 0 44 44"><path d="M2 2 H42 V34 H28 L22 40 L16 34 H2 Z" fill="none" stroke="#fff" stroke-width="3"/></svg>
<div style="left:4386px;top:2365px;width:3px;height:110px;background:#5a5a5a"></div>
</body></html>
